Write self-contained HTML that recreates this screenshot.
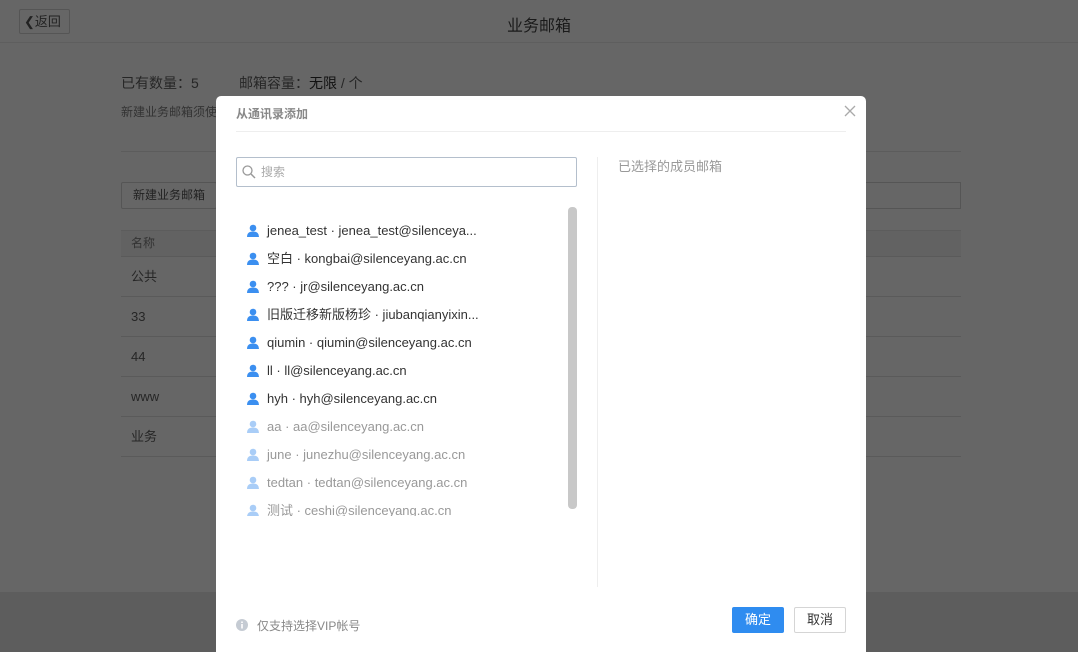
<!DOCTYPE html>
<html style="width:1078px;height:652px;overflow:hidden"><head><meta charset="utf-8"><style>
*{margin:0;padding:0;box-sizing:border-box}
body{width:1078px;height:652px;overflow:hidden;background:#666;font-family:"Liberation Sans","Noto Sans CJK SC",sans-serif;position:relative;font-size:13px}
.a{position:absolute}
.hdr{left:0;top:0;width:1078px;height:43px;border-bottom:1px solid #5e5e5e}
.back{left:19px;top:9px;width:51px;height:25px;border:1px solid #555;border-radius:2px;color:#222;font-size:13px;line-height:23px;padding-left:4px}
.t1{left:0;width:1078px;top:12px;text-align:center;font-size:16px;color:#1a1a1a}
.row{left:121px;width:840px;height:40px;border-bottom:1px solid #5a5a5a;color:#262626;font-size:13px;line-height:40px;padding-left:10px}
.modal{left:216px;top:96px;width:650px;height:556px;background:#fff;border-radius:5px 5px 0 0}
.it{left:246px;height:28px;line-height:28px;font-size:13px;color:#333;white-space:nowrap}
.it svg{vertical-align:-2px;margin-right:7px}
.g{color:#999}
</style></head><body>
<div class="a hdr"></div>
<div class="a back">&#10094;返回</div>
<div class="a t1">业务邮箱</div>
<div class="a" style="left:121px;top:73px;font-size:14px;color:#262626">已有数量：5</div>
<div class="a" style="left:239px;top:73px;font-size:14px;color:#262626">邮箱容量：<span style="color:#111">无限</span> / 个</div>
<div class="a" style="left:121px;top:103px;font-size:12px;color:#333">新建业务邮箱须使</div>
<div class="a" style="left:121px;top:151px;width:840px;height:1px;background:#5c5c5c"></div>
<div class="a" style="left:121px;top:182px;width:96px;height:27px;border:1px solid #555;border-radius:2px;color:#222;font-size:12px;line-height:25px;text-align:center">新建业务邮箱</div>
<div class="a" style="left:860px;top:182px;width:101px;height:27px;border:1px solid #555;border-left:none"></div>
<div class="a" style="left:121px;top:230px;width:840px;height:27px;background:#626262;border-top:1px solid #5c5c5c;border-bottom:1px solid #5a5a5a;color:#333;font-size:12px;line-height:25px;padding-left:10px">名称</div>
<div class="a row" style="top:257px">公共</div>
<div class="a row" style="top:297px">33</div>
<div class="a row" style="top:337px">44</div>
<div class="a row" style="top:377px">www</div>
<div class="a row" style="top:417px">业务</div>
<div class="a" style="left:0;top:592px;width:1078px;height:60px;background:#5d5d5d"></div>

<div class="a modal"></div>
<div class="a" style="left:236px;top:105px;font-size:12px;font-weight:bold;color:#888">从通讯录添加</div>
<svg class="a" style="left:844px;top:105px" width="12" height="12"><path d="M1 1L11 11M11 1L1 11" stroke="#aaa" stroke-width="1.3"/></svg>
<div class="a" style="left:236px;top:131px;width:610px;height:1px;background:#eee"></div>
<div class="a" style="left:236px;top:157px;width:341px;height:30px;border:1px solid #b4bfcc;border-radius:2px"></div>
<svg class="a" style="left:242px;top:165px" width="14" height="14"><circle cx="5.5" cy="5.5" r="4.5" fill="none" stroke="#999" stroke-width="1.3"/><path d="M9 9L13 13" stroke="#999" stroke-width="1.5"/></svg>
<div class="a" style="left:261px;top:163px;font-size:12px;color:#aaa">搜索</div>
<div class="a" style="left:568px;top:207px;width:9px;height:302px;background:#c8c8c8;border-radius:4px"></div>
<div class="a" style="left:597px;top:157px;width:1px;height:430px;background:#eee"></div>
<div class="a" style="left:618px;top:156px;font-size:13px;color:#999">已选择的成员邮箱</div>
<div class="a" style="left:236px;top:217px;width:330px;height:299px;overflow:hidden">
<div style="position:relative;left:-236px;top:-217px">
<div class="a it" style="top:217px"><svg width="14" height="13"><circle cx="7" cy="4" r="3.3" fill="#3b8ff0"/><path d="M1 13Q1 7.5 7 7.5Q13 7.5 13 13Z" fill="#3b8ff0"/></svg>jenea_test · jenea_test@silenceya...</div>
<div class="a it" style="top:245px"><svg width="14" height="13"><circle cx="7" cy="4" r="3.3" fill="#3b8ff0"/><path d="M1 13Q1 7.5 7 7.5Q13 7.5 13 13Z" fill="#3b8ff0"/></svg>空白 · kongbai@silenceyang.ac.cn</div>
<div class="a it" style="top:273px"><svg width="14" height="13"><circle cx="7" cy="4" r="3.3" fill="#3b8ff0"/><path d="M1 13Q1 7.5 7 7.5Q13 7.5 13 13Z" fill="#3b8ff0"/></svg>??? · jr@silenceyang.ac.cn</div>
<div class="a it" style="top:301px"><svg width="14" height="13"><circle cx="7" cy="4" r="3.3" fill="#3b8ff0"/><path d="M1 13Q1 7.5 7 7.5Q13 7.5 13 13Z" fill="#3b8ff0"/></svg>旧版迁移新版杨珍 · jiubanqianyixin...</div>
<div class="a it" style="top:329px"><svg width="14" height="13"><circle cx="7" cy="4" r="3.3" fill="#3b8ff0"/><path d="M1 13Q1 7.5 7 7.5Q13 7.5 13 13Z" fill="#3b8ff0"/></svg>qiumin · qiumin@silenceyang.ac.cn</div>
<div class="a it" style="top:357px"><svg width="14" height="13"><circle cx="7" cy="4" r="3.3" fill="#3b8ff0"/><path d="M1 13Q1 7.5 7 7.5Q13 7.5 13 13Z" fill="#3b8ff0"/></svg>ll · ll@silenceyang.ac.cn</div>
<div class="a it" style="top:385px"><svg width="14" height="13"><circle cx="7" cy="4" r="3.3" fill="#3b8ff0"/><path d="M1 13Q1 7.5 7 7.5Q13 7.5 13 13Z" fill="#3b8ff0"/></svg>hyh · hyh@silenceyang.ac.cn</div>
<div class="a it g" style="top:413px"><svg width="14" height="13"><circle cx="7" cy="4" r="3.3" fill="#a9cdf7"/><path d="M1 13Q1 7.5 7 7.5Q13 7.5 13 13Z" fill="#a9cdf7"/></svg>aa · aa@silenceyang.ac.cn</div>
<div class="a it g" style="top:441px"><svg width="14" height="13"><circle cx="7" cy="4" r="3.3" fill="#a9cdf7"/><path d="M1 13Q1 7.5 7 7.5Q13 7.5 13 13Z" fill="#a9cdf7"/></svg>june · junezhu@silenceyang.ac.cn</div>
<div class="a it g" style="top:469px"><svg width="14" height="13"><circle cx="7" cy="4" r="3.3" fill="#a9cdf7"/><path d="M1 13Q1 7.5 7 7.5Q13 7.5 13 13Z" fill="#a9cdf7"/></svg>tedtan · tedtan@silenceyang.ac.cn</div>
<div class="a it g" style="top:497px"><svg width="14" height="13"><circle cx="7" cy="4" r="3.3" fill="#a9cdf7"/><path d="M1 13Q1 7.5 7 7.5Q13 7.5 13 13Z" fill="#a9cdf7"/></svg>测试 · ceshi@silenceyang.ac.cn</div>
</div></div>
<svg class="a" style="left:236px;top:619px" width="12" height="12"><circle cx="6" cy="6" r="6" fill="#c5cbd3"/><rect x="5.2" y="5" width="1.6" height="4.5" fill="#fff"/><rect x="5.2" y="2.5" width="1.6" height="1.5" fill="#fff"/></svg>
<div class="a" style="left:257px;top:617px;font-size:12px;color:#888">仅支持选择VIP帐号</div>
<div class="a" style="left:732px;top:607px;width:52px;height:26px;background:#2f8cf0;border-radius:2px;color:#fff;font-size:13px;line-height:26px;text-align:center">确定</div>
<div class="a" style="left:794px;top:607px;width:52px;height:26px;border:1px solid #d5d5d5;border-radius:2px;color:#333;font-size:13px;line-height:24px;text-align:center">取消</div>
</body></html>
